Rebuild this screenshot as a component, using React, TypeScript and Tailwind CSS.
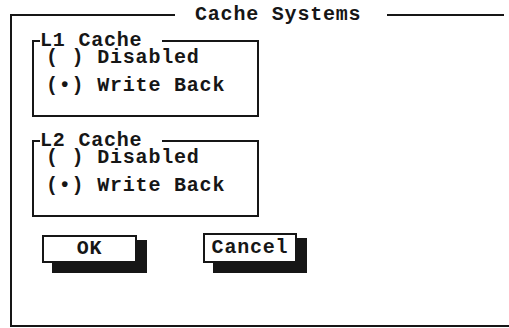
import React from "react";

const ink = "bg-[#161616]";

function GroupBox({ title, items }: { title: string; items: string[] }) {
  return (
    <div className="ml-[20px] w-[227px] border-x-2 border-b-2 border-[#161616]">
      <div className="-mx-[2px] flex h-[2px] items-center">
        <div className={`h-[2px] w-[8px] ${ink}`} />
        <span className="whitespace-pre leading-[12px]">{title}</span>
        <div className={`ml-[20px] h-[2px] flex-1 ${ink}`} />
      </div>
      <div className="pb-[15px] pl-[12px] pt-[2px]">
        {items.map((t) => (
          <div key={t} className="whitespace-pre py-[6px] leading-[16px]">
            {t}
          </div>
        ))}
      </div>
    </div>
  );
}

export default function App() {
  return (
    <div className="h-[328px] w-[509px] overflow-hidden bg-white pt-[14px] pl-[10px] font-['Liberation_Mono',monospace] text-[20px] font-bold tracking-[0.8px] text-[#161616]">
      <div className="h-[313px] w-[499px] border-b-2 border-l-2 border-[#161616]">
        <div className="-ml-[2px] flex h-[2px] items-center">
          <div className={`h-[2px] w-[165px] ${ink}`} />
          <span className="ml-[20px] whitespace-pre leading-[14px]">Cache Systems</span>
          <div className={`ml-[26px] h-[2px] w-[117px] ${ink}`} />
        </div>

        <div className="mt-[24px]">
          <GroupBox title="L1 Cache" items={["( ) Disabled", "(•) Write Back"]} />
        </div>
        <div className="mt-[23px]">
          <GroupBox title="L2 Cache" items={["( ) Disabled", "(•) Write Back"]} />
        </div>

        <div className="mt-[16px] flex items-end">
          <div className="ml-[30px] flex h-[28px] w-[95px] items-center justify-center border-2 border-[#161616] bg-white leading-none shadow-[10px_10px_0_0_#161616,10px_5px_0_0_#161616]">
            OK
          </div>
          <div className="ml-[66px] flex h-[30px] w-[94px] items-center justify-center border-2 border-[#161616] bg-white leading-none shadow-[10px_10px_0_0_#161616,10px_5px_0_0_#161616]">
            Cancel
          </div>
        </div>
      </div>
    </div>
  );
}
